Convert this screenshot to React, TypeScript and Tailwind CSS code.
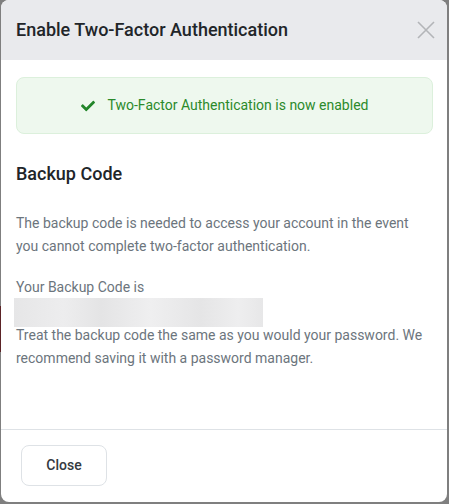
import React from "react";
import { FaCheck } from "react-icons/fa";

export default function App() {
  return (
    <div
      className="relative w-[449px] h-[504px] bg-[#7f7f7f] pl-[1px] pr-[2px] pb-[2px] flex"
      style={{ fontFamily: "Roboto, 'Liberation Sans', sans-serif" }}
    >
      <div className="absolute left-0 top-[306px] w-[1px] h-[46px] bg-[#5b2326]" />
      <div className="flex-1 flex flex-col bg-white rounded-lg overflow-hidden">
        <div className="h-[60px] shrink-0 bg-[#e9eaed] flex items-center justify-between pl-[15px] pr-[11px]">
          <h1 className="text-[18px] font-medium text-[#212529] leading-none mt-[-1px]">
            Enable Two-Factor Authentication
          </h1>
          <svg width="20" height="20" viewBox="0 0 20 20" className="mt-[-1px]">
            <path d="M2 2 L18 18 M18 2 L2 18" stroke="#b3b5b8" strokeWidth="1.6" fill="none" />
          </svg>
        </div>
        <div className="flex-1 px-[15px] pr-[14px] pt-[17px]">
          <div className="h-[57px] rounded-lg bg-[#eef8ee] border border-[#dcf0dc] flex items-center justify-center gap-[12px] text-[14px] text-[#2b8a2b]">
            <FaCheck className="w-[14px] h-[14px] text-[#23862a] mr-[1px]" />
            <span>Two-Factor Authentication is now enabled</span>
          </div>
          <h2 className="mt-[28px] text-[18px] leading-[24px] font-medium text-[#212529]">Backup Code</h2>
          <p className="mt-[26px] text-[14px] leading-[23px] text-[#6c757d]">
            The backup code is needed to access your account in the event you cannot complete two-factor authentication.
          </p>
          <p className="mt-[19px] text-[14px] leading-[21px] text-[#6c757d]">Your Backup Code is</p>
          <div className="ml-[-2px] w-[249px] h-[29px] bg-[linear-gradient(90deg,#e6e6e7_0%,#ededee_20%,#e4e4e5_35%,#efeff0_55%,#e5e5e6_75%,#eeeeef_90%,#e7e7e8_100%)]" />
          <p className="-mt-[3px] text-[14px] leading-[23px] text-[#6c757d] pr-[10px]">
            Treat the backup code the same as you would your password. We recommend saving it with a password manager.
          </p>
        </div>
        <div className="h-[73px] shrink-0 border-t border-[#dee2e6] pl-[20px] pt-[15px]">
          <button className="w-[86px] h-[41px] rounded-lg border border-[#dee2e6] bg-white text-[14px] font-medium text-[#343a40]">
            Close
          </button>
        </div>
      </div>
    </div>
  );
}
